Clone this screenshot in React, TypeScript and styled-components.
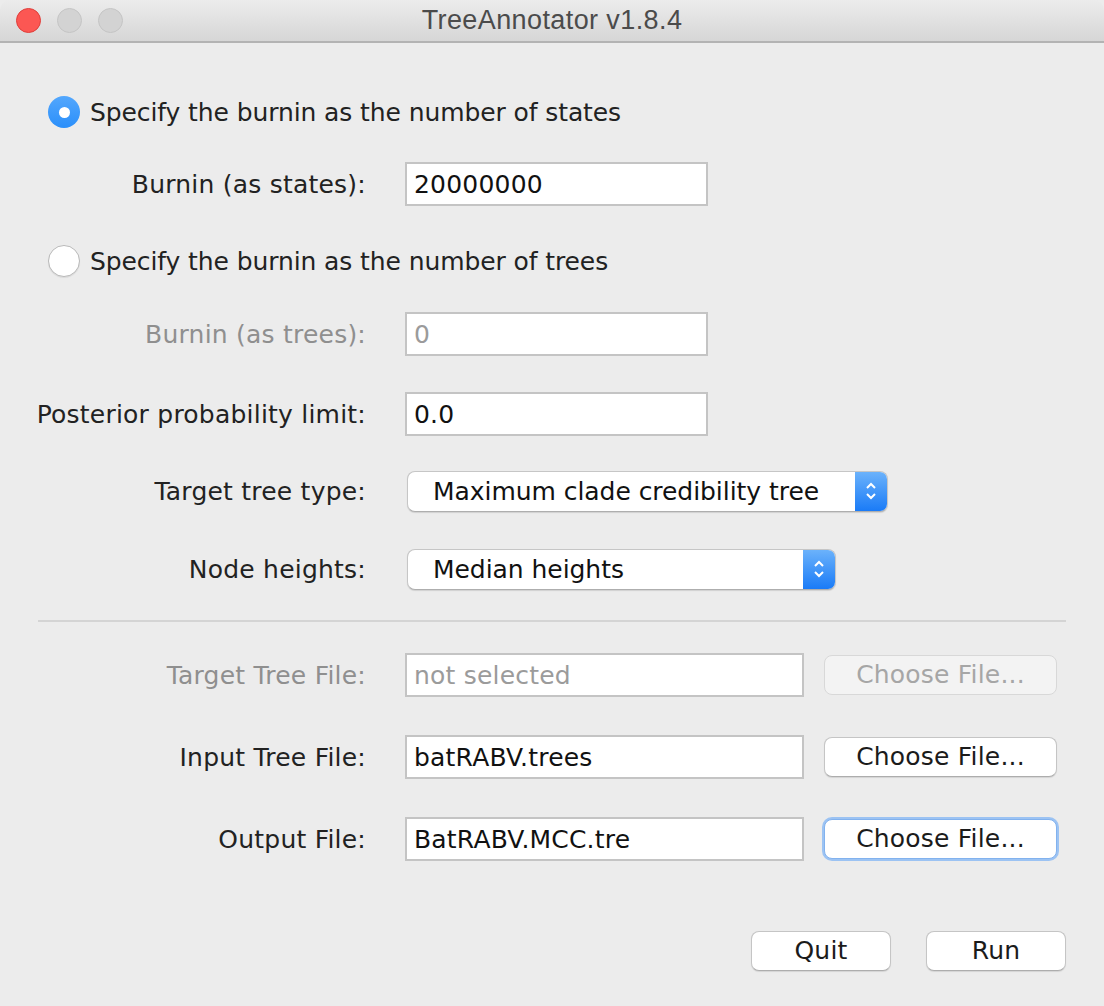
import React from "react";
import styled, { createGlobalStyle, css } from "styled-components";

const Global = createGlobalStyle`
  html, body { margin: 0; padding: 0; background: #ececec; }
  body { font-family: "DejaVu Sans", "Noto Sans", sans-serif; }
  * { box-sizing: border-box; }
`;

const Window = styled.div`
  width: 1104px;
  height: 1006px;
  background: #ececec;
  display: flex;
  flex-direction: column;
  overflow: hidden;
  border-radius: 10px 10px 0 0;
`;

const TitleBar = styled.div`
  height: 43px;
  flex: none;
  display: flex;
  align-items: center;
  position: relative;
  background: linear-gradient(#ececec, #d6d6d6);
  border-bottom: 2px solid #b3b3b3;
  padding-left: 16px;
  gap: 16px;
`;

const Light = styled.span<{ $red?: boolean }>`
  width: 25px;
  height: 25px;
  border-radius: 50%;
  ${(p) =>
    p.$red
      ? css`background: #fc5753; border: 1px solid #df3e3a;`
      : css`background: #d3d3d3; border: 1px solid #c4c4c4;`}
`;

const Title = styled.div`
  position: absolute;
  left: 0;
  right: 0;
  top: 0;
  bottom: 0;
  display: flex;
  align-items: center;
  justify-content: center;
  font-family: "Liberation Sans", Arial, sans-serif;
  font-size: 27px;
  letter-spacing: 0.4px;
  color: #4b4b4b;
  pointer-events: none;
`;

const Body = styled.div`
  display: flex;
  flex-direction: column;
  padding: 0 38px 0 0;
`;

const Row = styled.div<{ $gap: number }>`
  display: flex;
  align-items: center;
  height: 44px;
  margin-top: ${(p) => p.$gap}px;
`;

const RadioRow = styled(Row)`
  padding-left: 48px;
  gap: 10px;
`;

const RadioCircle = styled.span<{ $on?: boolean }>`
  width: 32px;
  height: 32px;
  border-radius: 50%;
  flex: none;
  display: flex;
  align-items: center;
  justify-content: center;
  ${(p) =>
    p.$on
      ? css`
          background: linear-gradient(#53a7fd, #2b8ffa);
          &::after {
            content: "";
            width: 11px;
            height: 11px;
            border-radius: 50%;
            background: #fff;
          }
        `
      : css`
          background: #fff;
          border: 1.5px solid #b9b9b9;
          box-shadow: 0 1px 1px rgba(0, 0, 0, 0.08);
        `}
`;

const Text = styled.span`
  font-size: 25px;
  letter-spacing: -0.1px;
  color: #222;
  white-space: nowrap;
`;

const Label = styled.span<{ $disabled?: boolean }>`
  width: 366px;
  flex: none;
  text-align: right;
  font-size: 25px;
  letter-spacing: 0.22px;
  white-space: nowrap;
  color: ${(p) => (p.$disabled ? "#8f8f8f" : "#222")};
  margin-right: 39px;
`;

const Field = styled.div<{ $w: number; $disabled?: boolean }>`
  width: ${(p) => p.$w}px;
  height: 44px;
  background: #fff;
  border: 2px solid #c4c4c4;
  display: flex;
  align-items: center;
  padding-left: 7px;
  font-size: 25px;
  letter-spacing: 0.2px;
  color: ${(p) => (p.$disabled ? "#9b9b9b" : "#111")};
  white-space: nowrap;
`;

const Combo = styled.div<{ $w: number }>`
  width: ${(p) => p.$w}px;
  height: 41px;
  margin-left: 2px;
  background: #fff;
  border: 1.5px solid #c6c6c6;
  border-bottom-color: #aeaeae;
  border-radius: 8px;
  box-shadow: 0 1px 1px rgba(0, 0, 0, 0.12);
  display: flex;
  align-items: center;
  overflow: hidden;
`;

const ComboText = styled.span`
  flex: 1;
  padding-left: 25px;
  font-size: 25px;
  letter-spacing: -0.05px;
  color: #111;
  white-space: nowrap;
`;

const ComboArrow = styled.span`
  width: 32px;
  align-self: stretch;
  background: linear-gradient(#6bb2fb, #1a7bf7);
  display: flex;
  align-items: center;
  justify-content: center;
`;

const Separator = styled.div`
  height: 2px;
  background: #d4d4d4;
  margin: 29px 0 0 38px;
  width: 1028px;
`;

const Button = styled.button<{ $w: number; $disabled?: boolean; $focus?: boolean }>`
  width: ${(p) => p.$w}px;
  height: 40px;
  border-radius: 8px;
  font-family: "DejaVu Sans", "Noto Sans", sans-serif;
  font-size: 25px;
  letter-spacing: 0.2px;
  padding: 0 0 2px;
  white-space: nowrap;
  ${(p) =>
    p.$disabled
      ? css`
          background: #f3f3f3;
          border: 1.5px solid #d8d8d8;
          color: #a6a6a6;
        `
      : css`
          background: #fff;
          border: 1.5px solid #c5c5c5;
          border-bottom-color: #adadad;
          color: #1b1b1b;
          box-shadow: 0 1px 1px rgba(0, 0, 0, 0.1);
        `}
  ${(p) =>
    p.$focus &&
    css`
      border-color: #82b2ee;
      box-shadow: 0 0 0 2px #9cc3f3;
    `}
`;

const FileButton = styled(Button)`
  margin-left: 20px;
`;

const Footer = styled.div`
  display: flex;
  justify-content: flex-end;
  gap: 35px;
  margin-top: 70px;
`;

function Chevrons() {
  return (
    <svg width="14" height="26" viewBox="0 0 14 26">
      <path d="M3 10 L7 6 L11 10" fill="none" stroke="#fff" strokeWidth="2" />
      <path d="M3 16 L7 20 L11 16" fill="none" stroke="#fff" strokeWidth="2" />
    </svg>
  );
}

export default function App() {
  return (
    <>
      <Global />
      <Window>
        <TitleBar>
          <Light $red />
          <Light />
          <Light />
          <Title>TreeAnnotator v1.8.4</Title>
        </TitleBar>
        <Body>
          <RadioRow $gap={47}>
            <RadioCircle $on />
            <Text>Specify the burnin as the number of states</Text>
          </RadioRow>
          <Row $gap={28}>
            <Label>Burnin (as states):</Label>
            <Field $w={303}>20000000</Field>
          </Row>
          <RadioRow $gap={33}>
            <RadioCircle />
            <Text>Specify the burnin as the number of trees</Text>
          </RadioRow>
          <Row $gap={29}>
            <Label $disabled>Burnin (as trees):</Label>
            <Field $w={303} $disabled>0</Field>
          </Row>
          <Row $gap={36}>
            <Label>Posterior probability limit:</Label>
            <Field $w={303}>0.0</Field>
          </Row>
          <Row $gap={33}>
            <Label>Target tree type:</Label>
            <Combo $w={481}>
              <ComboText>Maximum clade credibility tree</ComboText>
              <ComboArrow>
                <Chevrons />
              </ComboArrow>
            </Combo>
          </Row>
          <Row $gap={34}>
            <Label>Node heights:</Label>
            <Combo $w={429}>
              <ComboText>Median heights</ComboText>
              <ComboArrow>
                <Chevrons />
              </ComboArrow>
            </Combo>
          </Row>
          <Separator />
          <Row $gap={31}>
            <Label $disabled>Target Tree File:</Label>
            <Field $w={399} $disabled>not selected</Field>
            <FileButton $w={233} $disabled>Choose File...</FileButton>
          </Row>
          <Row $gap={38}>
            <Label>Input Tree File:</Label>
            <Field $w={399}>batRABV.trees</Field>
            <FileButton $w={233}>Choose File...</FileButton>
          </Row>
          <Row $gap={38}>
            <Label>Output File:</Label>
            <Field $w={399}>BatRABV.MCC.tre</Field>
            <FileButton $w={233} $focus>Choose File...</FileButton>
          </Row>
          <Footer>
            <Button $w={140}>Quit</Button>
            <Button $w={140}>Run</Button>
          </Footer>
        </Body>
      </Window>
    </>
  );
}
